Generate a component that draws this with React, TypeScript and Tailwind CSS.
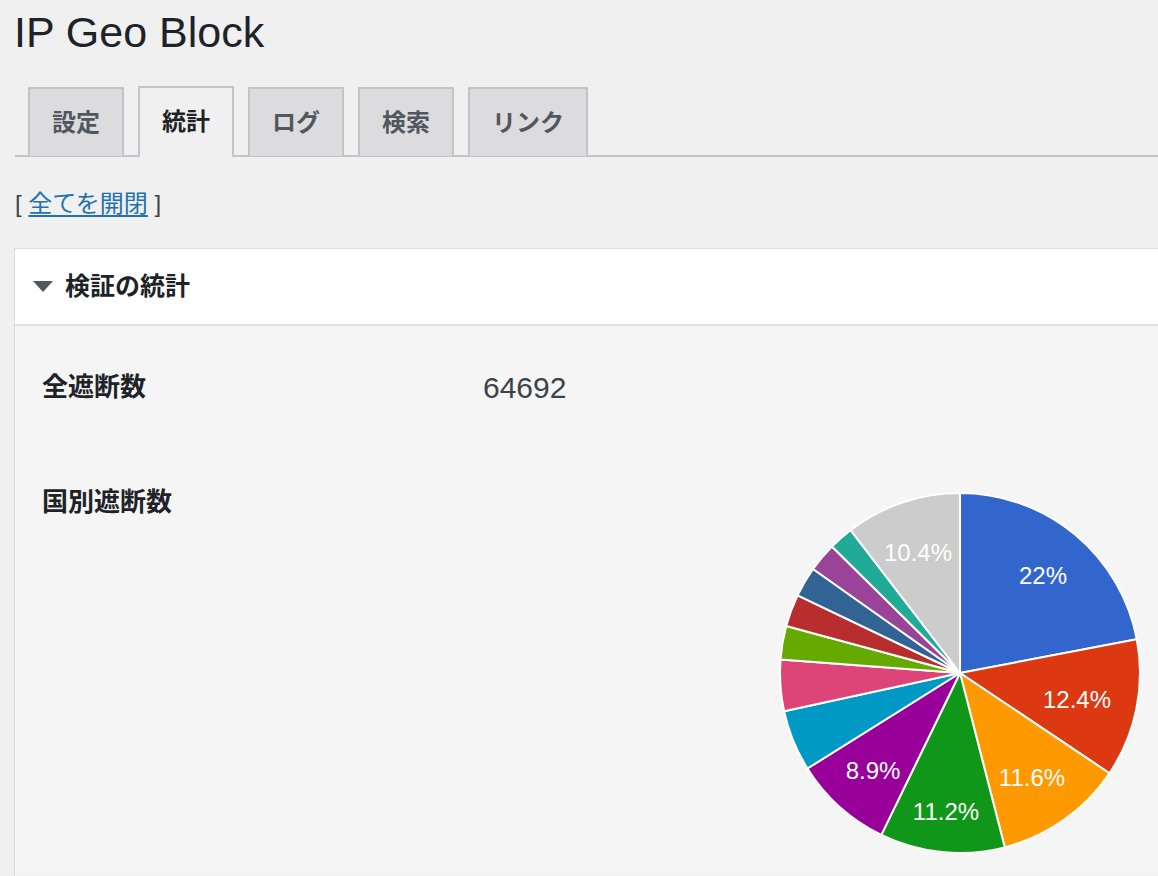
const slices = [
  { v: 22, color: "#3366cc", label: "22%", x: 560, y: 92 },
  { v: 12.4, color: "#dc3912", label: "12.4%", x: 594, y: 216 },
  { v: 11.6, color: "#ff9900", label: "11.6%", x: 549, y: 294 },
  { v: 11.2, color: "#109618", label: "11.2%", x: 463, y: 328 },
  { v: 8.9, color: "#990099", label: "8.9%", x: 390, y: 287 },
  { v: 5.5, color: "#0099c6" },
  { v: 4.6, color: "#dd4477" },
  { v: 3.0, color: "#66aa00" },
  { v: 2.9, color: "#b82e2e" },
  { v: 2.7, color: "#316395" },
  { v: 2.6, color: "#994499" },
  { v: 2.2, color: "#22aa99" },
  { v: 10.4, color: "#cccccc", label: "10.4%", x: 435, y: 69 },
];

const tabs = ["設定", "統計", "ログ", "検索", "リンク"];

const font = { fontFamily: '"Liberation Sans", "Noto Sans CJK JP", sans-serif' };

// pie center inside the svg
const CX = 477;
const CY = 190;
const R = 180;

const point = (frac: number) => {
  const a = frac * Math.PI * 2;
  return [CX + R * Math.sin(a), CY - R * Math.cos(a)];
};

const Pie = () => {
  let acc = 0;
  return (
    <svg width="675" height="392" className="block">
      {slices.map((s, i) => {
        const start = acc / 100;
        acc += s.v;
        const end = acc / 100;
        const [x1, y1] = point(start);
        const [x2, y2] = point(end);
        const large = end - start > 0.5 ? 1 : 0;
        return (
          <path
            key={i}
            d={`M${CX} ${CY} L${x1} ${y1} A${R} ${R} 0 ${large} 1 ${x2} ${y2} Z`}
            fill={s.color}
            stroke="#ffffff"
            strokeWidth="2"
            strokeLinejoin="round"
          />
        );
      })}
      {slices
        .filter((s) => s.label)
        .map((s) => (
          <text
            key={s.label}
            x={s.x}
            y={s.y}
            fill="#ffffff"
            fontSize="24"
            textAnchor="middle"
            dominantBaseline="central"
            fontFamily="Liberation Sans, Arial, sans-serif"
          >
            {s.label}
          </text>
        ))}
    </svg>
  );
};

export default function App() {
  return (
    <div className="h-[876px] w-full overflow-hidden bg-[#f0f0f1] text-[#1d2327]" style={font}>
      <div className="pt-[8px] pl-[14px]">
        <h1 className="text-[43px] leading-[48px] font-normal">IP Geo Block</h1>
      </div>

      <div className="mt-[30px] ml-[15px] flex h-[71px] gap-[14px] border-b-2 border-[#c3c4c7] pl-[13px]">
        {tabs.map((t) => {
          const active = t === "統計";
          return (
            <div
              key={t}
              className={
                active
                  ? "-mb-[2px] flex h-[72px] items-center border-2 border-[#c3c4c7] border-b-[#f0f0f1] bg-[#f0f0f1] px-[22px] text-[24px] font-bold text-[#1d2327]"
                  : "mt-[1px] flex h-[69px] items-center border-2 border-b-0 border-[#c3c4c7] bg-[#dcdcde] px-[22px] text-[24px] font-bold text-[#50575e]"
              }
            >
              {t}
            </div>
          );
        })}
      </div>

      <div className="mt-[31px] ml-[15px] text-[24px] leading-[32px] text-[#3c434a]">
        [ <a className="text-[#2271b1] underline underline-offset-[3px]">全てを開閉</a> ]
      </div>

      <div className="mt-[28px] ml-[14px] border-t border-l border-[#dcdcde] bg-[#f5f5f5]">
        <div className="flex h-[77px] items-center border-b-2 border-[#e2e2e4] bg-white pl-[18px]">
          <span className="mr-[12px] h-0 w-0 border-x-[10px] border-t-[11px] border-x-transparent border-t-[#50575e]" />
          <span className="text-[25px] font-bold">検証の統計</span>
        </div>

        <div className="pl-[27px]">
          <div className="mt-[43px] flex h-[36px] items-center">
            <div className="w-[441px] text-[26px] font-bold">全遮断数</div>
            <div className="text-[30px] text-[#3c434a]">64692</div>
          </div>

          <div className="mt-[78px] flex items-start">
            <div className="flex h-[36px] w-[441px] items-center pt-[3px] text-[26px] font-bold">国別遮断数</div>
            <Pie />
          </div>
        </div>
      </div>
    </div>
  );
}
